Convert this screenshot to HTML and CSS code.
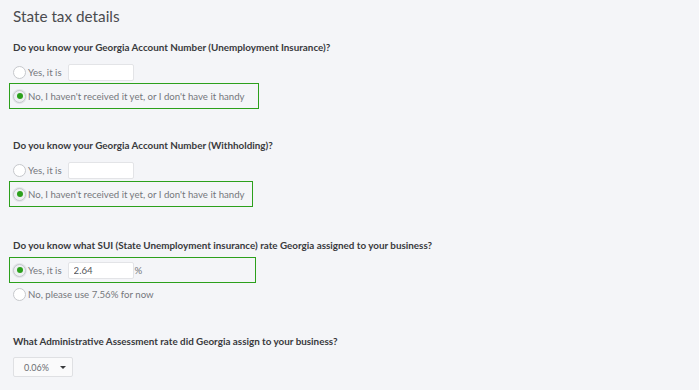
FILE: index.html
```html
<!DOCTYPE html>
<html lang="en">
<head>
    <meta charset="UTF-8">
    <meta name="viewport" content="width=device-width, initial-scale=1.0">
    <title>State tax details</title>
    <link rel="stylesheet" href="styles.css">
</head>
<body>
    <div class="page">
        <h1 class="title">State tax details</h1>

        <section class="group">
            <p class="question">Do you know your Georgia Account Number (Unemployment Insurance)?</p>
            <label class="option">
                <span class="radio"></span>
                <span class="opt-text">Yes, it is</span>
                <input type="text" class="field">
            </label>
            <label class="option picked box-a">
                <span class="radio on"></span>
                <span class="opt-text">No, I haven't received it yet, or I don't have it handy</span>
            </label>
        </section>

        <section class="group">
            <p class="question">Do you know your Georgia Account Number (Withholding)?</p>
            <label class="option">
                <span class="radio"></span>
                <span class="opt-text">Yes, it is</span>
                <input type="text" class="field">
            </label>
            <label class="option picked box-b">
                <span class="radio on"></span>
                <span class="opt-text">No, I haven't received it yet, or I don't have it handy</span>
            </label>
        </section>

        <section class="group group-rate">
            <p class="question">Do you know what SUI (State Unemployment insurance) rate Georgia assigned to your business?</p>
            <label class="option picked box-c">
                <span class="radio on"></span>
                <span class="opt-text">Yes, it is</span>
                <input type="text" class="field" value="2.64">
                <span class="opt-text pct">%</span>
            </label>
            <label class="option">
                <span class="radio"></span>
                <span class="opt-text">No, please use 7.56% for now</span>
            </label>
        </section>

        <section class="group group-admin">
            <p class="question">What Administrative Assessment rate did Georgia assign to your business?</p>
            <div class="select">
                <span class="select-val">0.06%</span>
                <span class="caret"></span>
            </div>
        </section>
    </div>
</body>
</html>
```

FILE: styles.css
```css
body {
    margin: 0;
    background: #f4f5f8;
    font-family: Lato, "Open Sans", sans-serif;
    color: #393a3d;
}

.page { padding: 5px 13px 0 13px; }

.title {
    margin: 0;
    font-size: 15.3px;
    font-weight: 400;
    line-height: 22px;
    color: #4a4b4f;
}

.group { margin-top: 8px; }
.group + .group { margin-top: 25px; }
.group + .group-rate { margin-top: 27px; }
.group + .group-admin { margin-top: 23px; }

.question {
    margin: 0 0 1px 0;
    font-size: 9.85px;
    font-weight: 700;
    line-height: 24px;
    color: #393a3d;
}

.option {
    display: flex;
    align-items: center;
    height: 24px;
    margin-left: -3px;
    padding-left: 3px;
}

.option.picked { outline: 1px solid #2ca01c; }
.box-a { width: 245px; }
.box-b { width: 239px; }
.box-c { width: 242px; }

.radio {
    width: 11px;
    height: 11px;
    border: 1px solid #c6c8cc;
    border-radius: 50%;
    background: #fff;
    box-sizing: content-box;
    display: flex;
    align-items: center;
    justify-content: center;
    flex: none;
}

.radio.on {
    background: #eef0f3;
    box-shadow: 0 0 0 1px #e4e6ea;
}

.radio.on::after {
    content: '';
    width: 6px;
    height: 6px;
    border-radius: 50%;
    background: #2ca01c;
}

.opt-text {
    margin-left: 2px;
    font-size: 9.65px;
    color: #75777c;
    white-space: nowrap;
}

.field {
    margin-left: 6px;
    width: 66px;
    height: 17px;
    box-sizing: border-box;
    border: 1px solid #e3e4e7;
    border-radius: 2px;
    background: #fff;
    padding: 0 5px;
    font-family: inherit;
    font-size: 9.65px;
    color: #55575c;
}

.pct { margin-left: 1px; }

.select {
    margin-top: 4px;
    width: 60px;
    height: 20px;
    box-sizing: border-box;
    border: 1px solid #dfe0e3;
    border-radius: 2px;
    background: #fafafb;
    display: flex;
    align-items: center;
    padding-left: 10px;
}

.select-val {
    font-size: 9px;
    color: #6b6d72;
}

.caret {
    margin-left: 11px;
    width: 0;
    height: 0;
    border-left: 3px solid transparent;
    border-right: 3px solid transparent;
    border-top: 3px solid #393a3d;
}
```
